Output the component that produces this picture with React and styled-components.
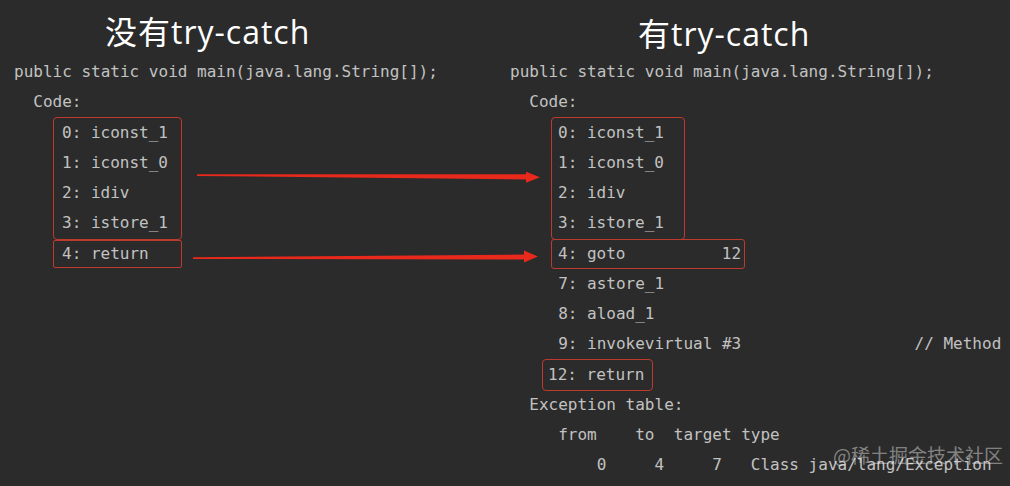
import React from "react";
import styled, { createGlobalStyle } from "styled-components";

const GlobalStyle = createGlobalStyle`
  html, body {
    margin: 0;
    padding: 0;
    background: #2b2b2b;
    overflow: hidden;
  }
`;

const Page = styled("div")`
  position: relative;
  width: 1010px;
  height: 486px;
  display: flex;
  padding-left: 14px;
  box-sizing: border-box;
  background: #2b2b2b;
  overflow: hidden;
`;

const Column = styled("section")`
  width: ${(p) => p.$width || "auto"};
  flex: ${(p) => (p.$width ? "none" : "1")};
  display: flex;
  flex-direction: column;
`;

const Title = styled("h2")`
  margin: 0;
  height: 57px;
  box-sizing: border-box;
  padding-top: ${(p) => p.$top}px;
  padding-left: ${(p) => p.$left}px;
  font-family: "Open Sans", "Noto Sans CJK SC", sans-serif;
  font-size: 32px;
  font-weight: normal;
  line-height: 32px;
  letter-spacing: 1px;
  color: #ffffff;
  white-space: nowrap;
`;

const Code = styled("div")`
  font-family: "DejaVu Sans Mono", "Liberation Mono", monospace;
  font-size: 16px;
  color: #c2c2c2;
  white-space: pre;
`;

const Line = styled("div")`
  height: 30.25px;
  line-height: 30.25px;
  padding-left: ${(p) => p.$indent || "0px"};
`;

const Box = styled("div")`
  margin-left: ${(p) => p.$left}px;
  width: ${(p) => p.$width}px;
  padding-left: ${(p) => p.$pad}px;
  box-sizing: border-box;
  outline: 1px solid #bf3a2e;
  outline-offset: ${(p) => p.$offset}px;
  border-radius: 3px;
`;

const Arrows = styled("svg")`
  position: absolute;
  left: 0;
  top: 0;
  pointer-events: none;
`;

const Watermark = styled("div")`
  position: absolute;
  left: 833px;
  top: 441px;
  font-family: "Noto Sans CJK SC", sans-serif;
  font-size: 19px;
  line-height: 28px;
  color: rgba(255, 255, 255, 0.42);
  white-space: nowrap;
`;

const Block = ({ left, width, pad, offset, lines }) => (
  <Box $left={left} $width={width} $pad={pad} $offset={offset}>
    {lines.map((text) => (
      <Line key={text}>{text}</Line>
    ))}
  </Box>
);

export default function App() {
  return (
    <>
      <GlobalStyle />
      <Page>
        <Column $width="496px">
          <Title $left={91} $top={16}>没有try-catch</Title>
          <Code>
            <Line>public static void main(java.lang.String[]);</Line>
            <Line $indent="2ch">Code:</Line>
            <Block
              left={40}
              width={127}
              pad={8}
              offset={0}
              lines={["0: iconst_1", "1: iconst_0", "2: idiv", "3: istore_1"]}
            />
            <Block left={38} width={131} pad={10} offset={-2} lines={["4: return"]} />
          </Code>
        </Column>
        <Column>
          <Title $left={128} $top={18}>有try-catch</Title>
          <Code>
            <Line>public static void main(java.lang.String[]);</Line>
            <Line $indent="2ch">Code:</Line>
            <Block
              left={42}
              width={132}
              pad={6}
              offset={0}
              lines={["0: iconst_1", "1: iconst_0", "2: idiv", "3: istore_1"]}
            />
            <Block left={41} width={194} pad={7} offset={-1} lines={["4: goto          12"]} />
            <Line $indent="5ch">7: astore_1</Line>
            <Line $indent="5ch">8: aload_1</Line>
            <Line $indent="5ch">9: invokevirtual #3                  // Method java/io/PrintStream.println</Line>
            <Block left={33} width={109} pad={5} offset={0} lines={["12: return"]} />
            <Line $indent="2ch">Exception table:</Line>
            <Line $indent="5ch">from    to  target type</Line>
            <Line $indent="5ch">    0     4     7   Class java/lang/Exception</Line>
          </Code>
        </Column>
        <Arrows width="1010" height="486" viewBox="0 0 1010 486">
          <polygon
            fill="#e8291c"
            points="197,174.3 526,174.2 526,171.8 540,177.3 526,182.8 526,179.4 197,175.9"
          />
          <polygon
            fill="#e8291c"
            points="193,257.3 524,254.6 524,250.5 538,256.6 524,262.4 524,259.6 193,258.9"
          />
        </Arrows>
        <Watermark>@稀土掘金技术社区</Watermark>
      </Page>
    </>
  );
}
